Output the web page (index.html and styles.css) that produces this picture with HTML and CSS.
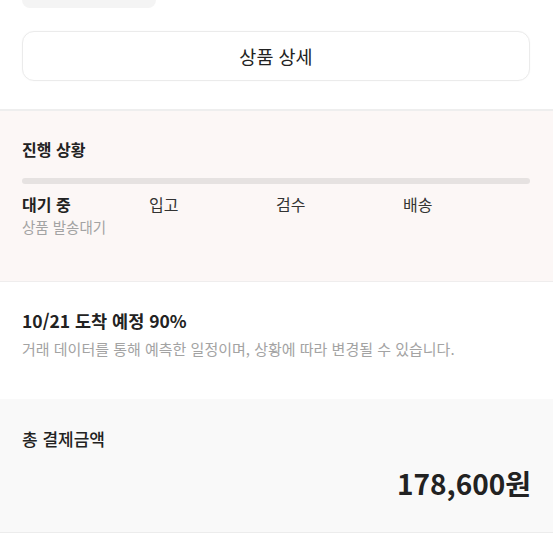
FILE: index.html
```html
<!DOCTYPE html>
<html lang="ko">
<head>
<meta charset="utf-8">
<link rel="stylesheet" href="styles.css">
</head>
<body>
<div class="page">
  <div class="top">
    <div class="pill"></div>
    <button class="detail-btn">상품 상세</button>
  </div>
  <section class="progress">
    <h2 class="title">진행 상황</h2>
    <div class="bar"></div>
    <div class="steps">
      <div class="step active">
        <div class="step-name">대기 중</div>
        <div class="step-desc">상품 발송대기</div>
      </div>
      <div class="step"><div class="step-name">입고</div></div>
      <div class="step"><div class="step-name">검수</div></div>
      <div class="step"><div class="step-name">배송</div></div>
    </div>
  </section>
  <section class="arrival">
    <h2 class="arrival-title">10/21 도착 예정 90%</h2>
    <p class="arrival-desc">거래 데이터를 통해 예측한 일정이며, 상황에 따라 변경될 수 있습니다.</p>
  </section>
  <section class="total">
    <h2 class="total-label">총 결제금액</h2>
    <div class="total-amount">178,600원</div>
  </section>
</div>
</body>
</html>
```

FILE: styles.css
```css
* { box-sizing: border-box; margin: 0; padding: 0; }
html, body { background: #fff; }
body {
  font-family: "Noto Sans CJK KR", "Noto Sans", sans-serif;
  color: #222;
  width: 553px;
  height: 553px;
  overflow: hidden;
}
.page { display: flex; flex-direction: column; }
.top {
  height: 109px;
  padding: 0 23px 0 22px;
  display: flex;
  flex-direction: column;
}
.pill {
  width: 134px;
  height: 8px;
  background: #f4f4f4;
  border-radius: 0 0 12px 12px;
}
.detail-btn {
  margin-top: 23px;
  height: 50px;
  width: 100%;
  background: #fff;
  border: 1px solid #ebebeb;
  border-radius: 12px;
  font-family: inherit;
  font-size: 18.5px;
  color: #222;
  box-shadow: 0 0 2px rgba(0,0,0,0.03);
}
.progress {
  border-top: 2px solid #eeeeee;
  background: #fcf7f6;
  height: 173px;
  padding: 26px 23px 0 22px;
  border-bottom: 1px solid #efeded;
}
.title {
  font-size: 16px;
  font-weight: 700;
  line-height: 24px;
}
.bar {
  margin-top: 17px;
  height: 6px;
  border-radius: 3px;
  background: #e6e2e1;
}
.steps {
  margin-top: 9px;
  display: grid;
  grid-template-columns: repeat(4, 1fr);
}
.step-name {
  font-size: 16px;
  line-height: 23px;
  color: #333;
}
.step.active .step-name { font-weight: 700; color: #222; }
.step-desc {
  font-size: 14.5px;
  line-height: 22px;
  color: #a3a3a3;
}
.arrival {
  height: 117px;
  padding: 26px 22px 0;
}
.arrival-title {
  font-size: 17.5px;
  font-weight: 700;
  line-height: 26px;
}
.arrival-desc {
  margin-top: 4px;
  font-size: 15px;
  line-height: 22px;
  color: #a3a3a3;
}
.total {
  background: #f9f9f9;
  height: 134px;
  padding: 27px 22px 0 22px;
  border-bottom: 1px solid #ececec;
}
.total-label {
  font-size: 17px;
  font-weight: 500;
  line-height: 26px;
}
.total-amount {
  margin-top: 13px;
  text-align: right;
  font-size: 28px;
  font-weight: 700;
  line-height: 36px;
}
```
